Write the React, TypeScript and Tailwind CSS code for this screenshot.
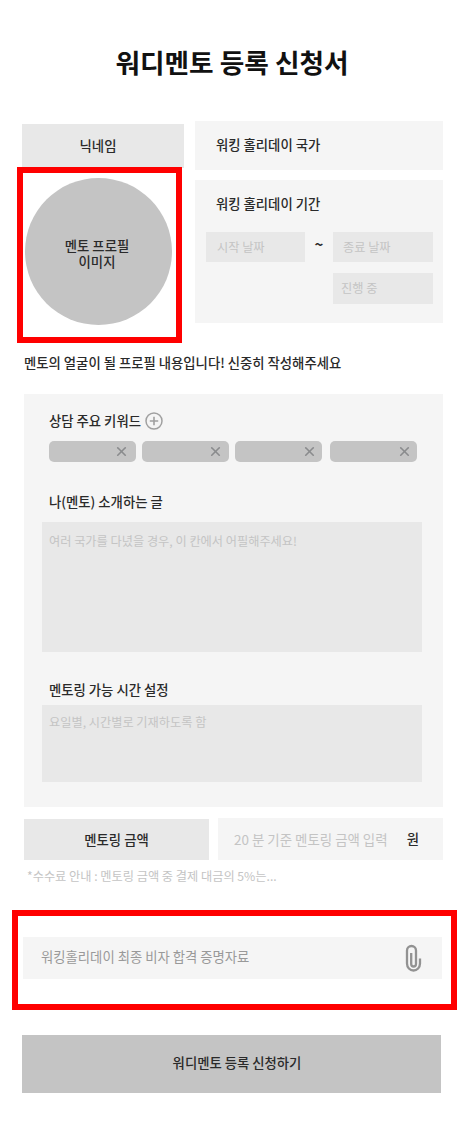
import type { ReactNode } from "react";
import { X } from "lucide-react";

function Placeholder({ children }: { children: ReactNode }) {
  return <span className="text-[12.2px] text-[#c4c4c4]">{children}</span>;
}

function Chip({ className }: { className: string }) {
  return (
    <div className={`flex h-[21px] w-[87px] items-center justify-end rounded-[5px] bg-[#c4c4c4] ${className}`}>
      <X className="h-[15px] w-[15px] text-[#8a8b8d]" strokeWidth={2.6} />
    </div>
  );
}

function PlusCircle() {
  return (
    <svg viewBox="0 0 18 18" className="ml-[4px] h-[18px] w-[18px]" fill="none" stroke="#a0a0a0">
      <circle cx="9" cy="9" r="8" strokeWidth="1.5" />
      <path d="M9 4.800v8.400M4.800 9h8.400" strokeWidth="1.6" />
    </svg>
  );
}

function PaperClip() {
  return (
    <svg viewBox="0 0 17 28" className="h-[28px] w-[17px]" fill="none" stroke="#929292" strokeWidth="2.3">
      <path d="M15 14.500v5a6.500 7 0 0 1-13 0V6.500a4.500 4.500 0 0 1 9 0V20a2.400 2.500 0 0 1-4.800 0V9" />
    </svg>
  );
}

function ProfileSection() {
  return (
    <section className="flex justify-between pl-[17px] pr-[22px]">
      <div className="w-[167px] pt-[3px]">
        <div className="ml-[5px] flex h-[44px] w-[162px] items-center justify-center bg-[#e8e8e8] pr-[10px]">
          닉네임
        </div>
        <div className="relative -mt-px h-[176px] w-[165px] border-[6px] border-[#ff0000] bg-white pl-[1.5px] pt-[5px]">
          <div className="flex h-[147px] w-[147px] flex-col items-center justify-center rounded-full bg-[#c4c4c4] pr-[2px] pt-[5px] leading-[16px]">
            <span>멘토 프로필</span>
            <span>이미지</span>
          </div>
        </div>
      </div>

      <div className="w-[248px]">
        <div className="flex h-[49px] items-center bg-[#f5f5f5] pl-[21px]">
          워킹 홀리데이 국가
        </div>
        <div className="mt-[10px] h-[143px] bg-[#f5f5f5] pl-[11px] pr-[10px] pt-[14px]">
          <p className="pl-[10px] leading-[20px]">워킹 홀리데이 기간</p>
          <div className="mt-[18px] flex justify-between">
            <div className="flex h-[30px] w-[99px] items-center bg-[#e8e8e8] pl-[11px] font-normal">
              <Placeholder>시작 날짜</Placeholder>
            </div>
            <span className="pt-px text-[15px] font-bold leading-[22px]">~</span>
            <div className="w-[100px] font-normal">
              <div className="flex h-[30px] items-center bg-[#e8e8e8] pl-[10px]">
                <Placeholder>종료 날짜</Placeholder>
              </div>
              <div className="mt-[11px] flex h-[31px] items-center bg-[#e8e8e8] pl-[8px]">
                <Placeholder>진행 중</Placeholder>
              </div>
            </div>
          </div>
        </div>
      </div>
    </section>
  );
}

function MentoringSection() {
  return (
    <section className="ml-[24px] mt-[21px] h-[413px] w-[419px] bg-[#f5f5f5] px-[18px] pt-[17px]">
      <div className="flex h-[20px] items-center pl-[7px]">
        상담 주요 키워드
        <PlusCircle />
      </div>
      <div className="mt-[10px] flex pl-[7px]">
        <Chip className="pr-[7px]" />
        <Chip className="ml-[6px] pr-[6px]" />
        <Chip className="ml-[6px] pr-[5px]" />
        <Chip className="ml-[8px] pr-[5px]" />
      </div>

      <p className="mt-[30px] pl-[7px] leading-[20px]">나(멘토) 소개하는 글</p>
      <div className="mt-[10px] h-[130px] w-[380px] bg-[#e8e8e8] pl-[7px] pt-[9px] font-normal leading-[20px]">
        <Placeholder>여러 국가를 다녔을 경우, 이 칸에서 어필해주세요!</Placeholder>
      </div>

      <p className="mt-[28px] pl-[7px] leading-[20px]">멘토링 가능 시간 설정</p>
      <div className="mt-[5px] h-[77px] w-[380px] bg-[#e8e8e8] pl-[7px] pt-[7px] font-normal leading-[20px]">
        <Placeholder>요일별, 시간별로 기재하도록 함</Placeholder>
      </div>
    </section>
  );
}

export default function App() {
  return (
    <main className="h-[1125px] w-[465px] overflow-hidden bg-white font-['Noto_Sans_CJK_KR',sans-serif] text-[13.35px] font-medium text-[#2a2a2a]">
      <h1 className="pr-px pt-[42px] text-center text-[26.7px] font-bold leading-[40px] text-[#111]">
        워디멘토 등록 신청서
      </h1>

      <div className="mt-[39px]">
        <ProfileSection />
      </div>

      <p className="ml-[24px] mt-[10px] leading-[20px]">
        멘토의 얼굴이 될 프로필 내용입니다! 신중히 작성해주세요
      </p>

      <MentoringSection />

      <section className="ml-[24px] mt-[11px] flex w-[419px] items-end justify-between">
        <div className="flex h-[41px] w-[185px] items-center justify-center bg-[#e8e8e8] pt-px">멘토링 금액</div>
        <div className="flex h-[42px] w-[225px] items-center justify-between bg-[#f5f5f5] pl-[16px] pr-[24px]">
          <span className="text-[13.45px] font-normal text-[#c4c4c4]">20 분 기준 멘토링 금액 입력</span>
          <span>원</span>
        </div>
      </section>
      <p className="ml-[27px] mt-[6px] font-normal leading-[20px]">
        <Placeholder>*수수료 안내 : 멘토링 금액 중 결제 대금의 5%는...</Placeholder>
      </p>

      <section className="ml-[12px] mt-[24px] h-[100px] w-[445px] border-[6px] border-[#ff0000] pl-[5px] pt-[21px]">
        <div className="flex h-[42px] w-[419px] items-center justify-between bg-[#f5f5f5] pb-px pl-[18px] pr-[20px]">
          <span className="font-normal text-[#999]">워킹홀리데이 최종 비자 합격 증명자료</span>
          <PaperClip />
        </div>
      </section>

      <button className="ml-[22px] mt-[25px] block h-[58px] w-[419px] bg-[#c4c4c4] pb-px pl-[11px]">
        워디멘토 등록 신청하기
      </button>
    </main>
  );
}
